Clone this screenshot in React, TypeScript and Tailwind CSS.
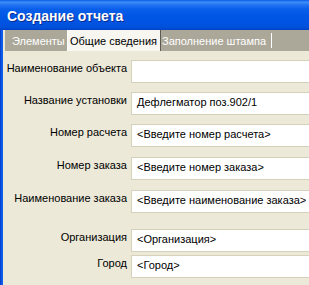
import React from "react";

const rows: { label: string; value: string; mt: string }[] = [
  { label: "Наименование объекта", value: "", mt: "mt-[9px]" },
  { label: "Название установки", value: "Дефлегматор поз.902/1", mt: "mt-[9px]" },
  { label: "Номер расчета", value: "<Введите номер расчета>", mt: "mt-[9px]" },
  { label: "Номер заказа", value: "<Введите номер заказа>", mt: "mt-[10px]" },
  { label: "Наименование заказа", value: "<Введите наименование заказа>", mt: "mt-[10px]" },
  { label: "Организация", value: "<Организация>", mt: "mt-[16px]" },
  { label: "Город", value: "<Город>", mt: "mt-[3px]" },
];

export default function App() {
  return (
    <div className="w-[309px] h-[285px] overflow-hidden flex flex-col font-['Liberation_Sans',Arial,sans-serif] text-black">
      <div className="h-[30px] shrink-0 flex items-center pl-[7px] pt-[2px] text-white font-bold text-[14px] leading-[15px] bg-[linear-gradient(to_bottom,#0a5ae8_0%,#3d8ff7_7%,#2274f2_16%,#0a5fea_30%,#0056e4_55%,#0053e0_80%,#004fd8_93%,#0040c4_100%)] [text-shadow:1px_1px_0_#0a2a8c]">
        Создание отчета
      </div>
      <div className="flex flex-1 bg-[#ece9d8]">
        <div className="w-[3px] shrink-0 bg-[linear-gradient(to_right,#0637c4,#0b57e6,#0f5fee)]" />
        <div className="flex-1 pl-[2px] flex flex-col min-w-0">
          <div className="h-[21px] shrink-0 bg-[#aca899] flex text-[11px] leading-[13px]">
            <div className="w-[62px] pl-[7px] flex items-center pt-[1px] text-white">Элементы</div>
            <div className="w-[94px] border-l border-l-white border-r border-r-[#5e5c52] bg-[#f7f6f1] pl-[2px] flex items-center pt-[1px] text-black">
              Общие сведения
            </div>
            <div className="pl-[1px] pr-[5px] flex items-center pt-[1px] text-white whitespace-nowrap">
              Заполнение штампа
            </div>
            <div className="w-px h-[15px] bg-white self-center" />
          </div>
          <div className="flex flex-col text-[11px] leading-[13px]">
            {rows.map((r) => (
              <div key={r.label} className={`flex ${r.mt}`}>
                <div className="w-[122px] shrink-0 text-right pt-[2px] whitespace-nowrap">{r.label}</div>
                <div className="ml-[4px] w-[200px] shrink-0 h-[23px] border border-[#d6d1ba] bg-white pl-[5px] pt-[3px] whitespace-nowrap overflow-hidden">
                  {r.value}
                </div>
              </div>
            ))}
          </div>
        </div>
      </div>
    </div>
  );
}
